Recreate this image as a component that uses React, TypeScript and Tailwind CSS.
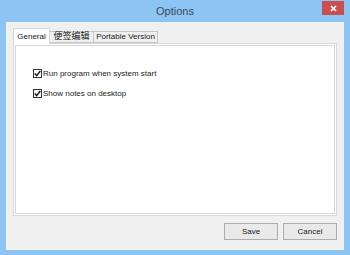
const font = { fontFamily: '"Liberation Sans", "Noto Sans CJK SC", sans-serif' };

function Check({ label }: { label: string }) {
  return (
    <div className="flex items-center gap-[1px] h-[9px]">
      <div className="w-[9px] h-[9px] border border-[#333333] bg-white flex items-center justify-center">
        <svg width="7" height="7" viewBox="0 0 7 7">
          <path d="M0.8 3.6 L2.7 5.6 L6.3 1" stroke="#1a1a1a" strokeWidth="1.5" fill="none" />
        </svg>
      </div>
      <span className="text-[8px] leading-none text-[#1a1a1a]">{label}</span>
    </div>
  );
}

function Button({ label }: { label: string }) {
  return (
    <button className="w-[54px] h-[17px] border border-[#adadad] bg-[#e9e9e9] text-[8px] text-[#1a1a1a] leading-none">
      {label}
    </button>
  );
}

export default function App() {
  return (
    <div className="w-[350px] h-[255px] bg-[#8cc4f3] flex flex-col" style={font}>
      <div className="relative h-[22px] flex items-center justify-center shrink-0">
        <span className="text-[11px] text-[#3b4a5a] pt-[1px]">Options</span>
        <div className="absolute left-[322px] top-[1px] w-[22px] h-[14px] bg-[#c75050] flex items-center justify-center">
          <svg width="7" height="7" viewBox="0 0 7 7">
            <path d="M1 1 L6 6 M6 1 L1 6" stroke="#ffffff" strokeWidth="1.6" />
          </svg>
        </div>
      </div>

      <div className="mx-[6px] mb-[5px] flex-1 bg-[#f0f0f0] flex flex-col px-[7px] pt-[6px] pb-[10px]">
        <div className="flex items-end h-[15px] relative z-10">
          <div className="w-[37px] h-[16px] bg-white border border-b-0 border-[#d9d9d9] text-[8px] text-[#1a1a1a] flex items-center justify-center -mb-[1px]">
            General
          </div>
          <div className="w-[44px] h-[12px] bg-[#f0f0f0] border border-l-0 border-[#c6c6c6] text-[9px] text-[#1a1a1a] flex items-center justify-center">
            便签编辑
          </div>
          <div className="w-[64px] h-[12px] bg-[#f0f0f0] border border-l-0 border-[#c6c6c6] text-[8px] text-[#1a1a1a] flex items-center justify-center">
            Portable Version
          </div>
        </div>

        <div className="h-[173px] border border-[#d9d9d9] bg-white p-[1px]">
          <div className="h-full border border-[#d6d6d6] bg-white flex flex-col gap-[11px] pl-[17px] pt-[23px]">
            <Check label="Run program when system start" />
            <Check label="Show notes on desktop" />
          </div>
        </div>

        <div className="flex justify-end gap-[5px] mt-[7px]">
          <Button label="Save" />
          <Button label="Cancel" />
        </div>
      </div>
    </div>
  );
}
